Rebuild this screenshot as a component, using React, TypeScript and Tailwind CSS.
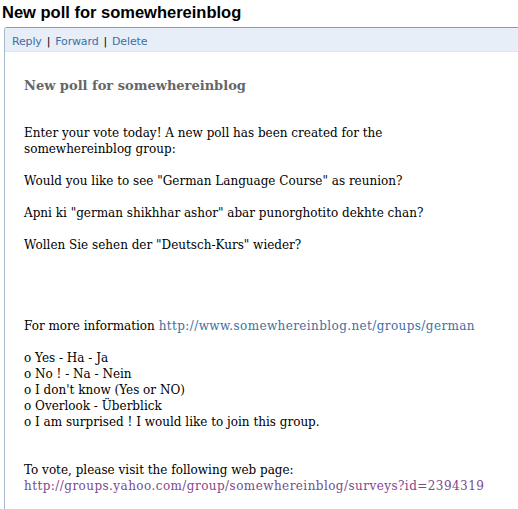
export default function App() {
  return (
    <div className="w-[518px] h-[509px] overflow-hidden bg-white">
      <h1 className="h-[27px] pl-[2px] pt-[2px] text-[16.5px] leading-[21px] font-bold text-black font-['Liberation_Sans',Arial,sans-serif]">
        New poll for somewhereinblog
      </h1>
      <div className="ml-[4px] border-l border-t border-l-[#a9b8c8] border-t-[#8e9ca2] rounded-tl-[3px]">
        <div className="h-[24px] bg-[#e8eef7] border-b border-[#dfe6ef] pl-[7px] pt-[5px] flex items-center text-[11px] tracking-[-0.15px] text-[#3d6fa6] font-['DejaVu_Sans',Verdana,sans-serif]">
          <span>Reply</span>
          <span className="px-[5px] text-black">|</span>
          <span>Forward</span>
          <span className="px-[5px] text-black">|</span>
          <span>Delete</span>
        </div>
        <div className="pl-[19px] pt-[25px] pb-[40px] text-[12px] leading-[16px] text-black font-['DejaVu_Serif',Georgia,serif]">
          <h2 className="text-[13px] font-bold text-[#666666] leading-[18px]">New poll for somewhereinblog</h2>
          <div className="mt-[30px]">
            <p>
              Enter your vote today! A new poll has been created for the
              <br />
              somewhereinblog group:
            </p>
            <p className="mt-[16px]">Would you like to see "German Language Course" as reunion?</p>
            <p className="mt-[16px]">Apni ki "german shikhhar ashor" abar punorghotito dekhte chan?</p>
            <p className="mt-[16px]">Wollen Sie sehen der "Deutsch-Kurs" wieder?</p>
            <p className="mt-[65px]">
              For more information{" "}
              <a className="text-[#3c6fa4] tracking-[0.4px]">http://www.somewhereinblog.net/groups/german</a>
            </p>
            <ul className="mt-[16px]">
              <li>o Yes - Ha - Ja</li>
              <li>o No ! - Na - Nein</li>
              <li>o I don't know (Yes or NO)</li>
              <li>o Overlook - Überblick</li>
              <li>o I am surprised ! I would like to join this group.</li>
            </ul>
            <p className="mt-[32px]">
              To vote, please visit the following web page:
              <br />
              <a className="text-[#7a4a8c] tracking-[0.44px]">http://groups.yahoo.com/group/somewhereinblog/surveys?id=2394319</a>
            </p>
          </div>
        </div>
      </div>
    </div>
  );
}
